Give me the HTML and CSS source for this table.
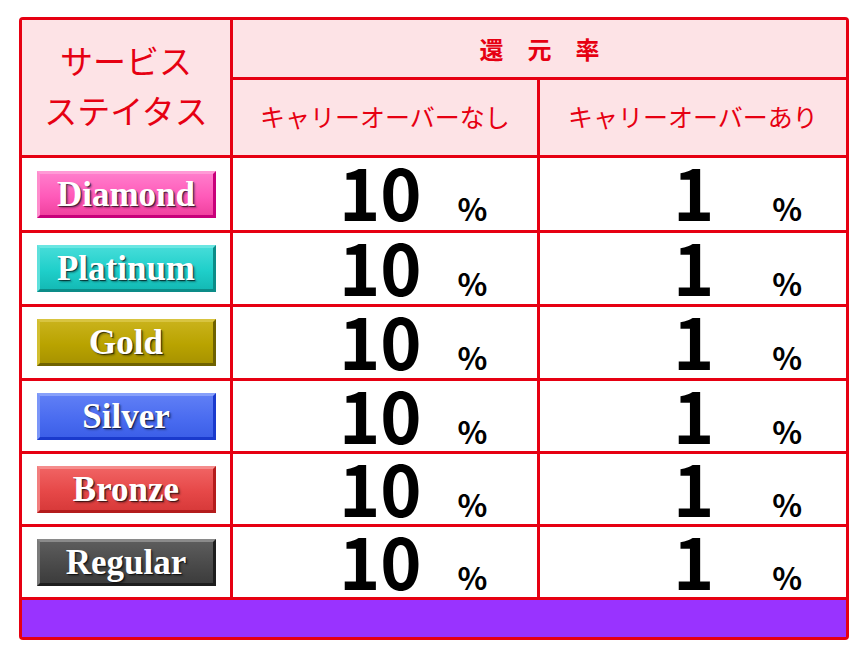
FILE: index.html
```html
<!DOCTYPE html>
<html lang="ja">
<head>
<meta charset="utf-8">
<title>還元率</title>
<link rel="stylesheet" href="styles.css">
</head>
<body>
<div class="table">
  <div class="cell head status">サービス<br>ステイタス</div>
  <div class="cell head rate">還元率</div>
  <div class="cell head sub">キャリーオーバーなし</div>
  <div class="cell head sub">キャリーオーバーあり</div>

  <div class="cell badge-cell"><span class="badge diamond">Diamond</span></div>
  <div class="cell val c2"><span class="num">10</span><span class="pct">%</span></div>
  <div class="cell val c3"><span class="num">1</span><span class="pct">%</span></div>

  <div class="cell badge-cell"><span class="badge platinum">Platinum</span></div>
  <div class="cell val c2"><span class="num">10</span><span class="pct">%</span></div>
  <div class="cell val c3"><span class="num">1</span><span class="pct">%</span></div>

  <div class="cell badge-cell"><span class="badge gold">Gold</span></div>
  <div class="cell val c2"><span class="num">10</span><span class="pct">%</span></div>
  <div class="cell val c3"><span class="num">1</span><span class="pct">%</span></div>

  <div class="cell badge-cell"><span class="badge silver">Silver</span></div>
  <div class="cell val c2"><span class="num">10</span><span class="pct">%</span></div>
  <div class="cell val c3"><span class="num">1</span><span class="pct">%</span></div>

  <div class="cell badge-cell"><span class="badge bronze">Bronze</span></div>
  <div class="cell val c2"><span class="num">10</span><span class="pct">%</span></div>
  <div class="cell val c3"><span class="num">1</span><span class="pct">%</span></div>

  <div class="cell badge-cell"><span class="badge regular">Regular</span></div>
  <div class="cell val c2"><span class="num">10</span><span class="pct">%</span></div>
  <div class="cell val c3"><span class="num">1</span><span class="pct">%</span></div>

  <div class="cell footer"></div>
</div>
</body>
</html>
```
FILE: styles.css
```css
html, body {
  margin: 0;
  padding: 0;
  background: #ffffff;
}
body {
  font-family: "Noto Sans CJK JP", "Noto Sans", sans-serif;
}
.table {
  margin: 17px 0 0 19px;
  width: 830px;
  box-sizing: border-box;
  display: grid;
  grid-template-columns: 208px 304px 306px;
  grid-template-rows: 57px 75px 72px 71px 71px 70px 70px 70px 37px;
  gap: 3px;
  padding: 3px;
  background: #e60012;
  border-radius: 4px;
}
.cell {
  background: #ffffff;
  display: flex;
  align-items: center;
  justify-content: center;
}
.head {
  background: #fde3e6;
  color: #e60012;
}
.status {
  grid-row: 1 / span 2;
  font-size: 33px;
  line-height: 50px;
  text-align: center;
  font-weight: 400;
  padding-bottom: 6px;
  box-sizing: border-box;
}
.rate {
  grid-column: 2 / span 2;
  font-size: 24px;
  font-weight: 700;
  letter-spacing: 24px;
  padding-left: 24px;
}
.sub {
  font-size: 25px;
  font-weight: 400;
  padding-bottom: 3px;
  box-sizing: border-box;
}
.val {
  justify-content: flex-start;
  align-items: baseline;
  color: #000000;
}
.num {
  font-size: 70px;
  font-weight: 700;
  line-height: 66px;
}
.pct {
  font-size: 31px;
  font-weight: 700;
  line-height: 31px;
}
.c2 { padding-left: 106px; }
.c2 .pct { margin-left: 36px; }
.c3 { padding-left: 133px; }
.c3 .pct { margin-left: 58px; }

.badge {
  box-sizing: border-box;
  width: 179px;
  height: 47px;
  display: flex;
  align-items: center;
  justify-content: center;
  font-family: "Liberation Serif", "DejaVu Serif", serif;
  font-weight: 700;
  font-size: 35px;
  color: #ffffff;
  text-shadow: 1px 1px 0 rgba(0,0,0,0.55), 2px 2px 2px rgba(0,0,0,0.35);
  border: 3px solid;
  padding-top: 1px;
}
.diamond {
  background: linear-gradient(#ff7ccb, #ff5ab9 55%, #f0429f);
  border-color: #ff9ad6 #c8007a #c8007a #ff8ccd;
}
.platinum {
  background: linear-gradient(#44dcd8, #1fcfca 55%, #14bab5);
  border-color: #6ae6e2 #0c8c88 #0c8c88 #5ee0dc;
}
.gold {
  background: linear-gradient(#c9b21a, #b9a300 55%, #a89300);
  border-color: #d8c440 #6f6200 #6f6200 #d2be30;
}
.silver {
  background: linear-gradient(#5f7ef5, #4a6cf0 55%, #3c5fe8);
  border-color: #87a0fa #1a3acd #1a3acd #7b96f8;
}
.bronze {
  background: linear-gradient(#f06262, #e64848 55%, #d83a3a);
  border-color: #f58c8c #b41c1c #b41c1c #f27e7e;
}
.regular {
  background: linear-gradient(#5c5c5c, #4a4a4a 55%, #3c3c3c);
  border-color: #8a8a8a #1e1e1e #1e1e1e #7a7a7a;
}
.footer {
  grid-column: 1 / span 3;
  background: #9933ff;
}
```
